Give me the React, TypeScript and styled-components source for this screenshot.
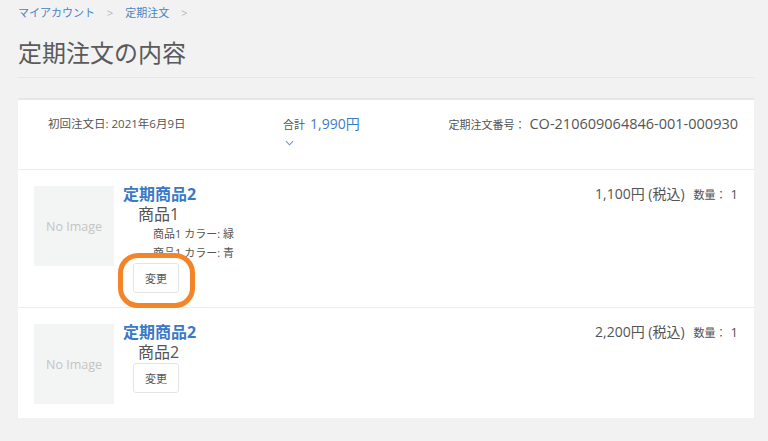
import styled, { createGlobalStyle } from "styled-components";

const GlobalStyle = createGlobalStyle`
  html, body {
    margin: 0;
    padding: 0;
    background: #f2f2f2;
  }
  body {
    font-family: "Open Sans", "Noto Sans CJK JP", sans-serif;
    color: #555;
  }
  * {
    box-sizing: border-box;
  }
`;

type Item = {
  id: number;
  name: string;
  options: string[];
  price: string;
  qty: number;
  marked?: boolean;
};

const items: Item[] = [
  {
    id: 1,
    name: "商品1",
    options: ["商品1 カラー: 緑", "商品1 カラー: 青"],
    price: "1,100円 (税込)",
    qty: 1,
    marked: true,
  },
  { id: 2, name: "商品2", options: [], price: "2,200円 (税込)", qty: 1 },
];

const App = () => {
  return (
    <Page>
      <GlobalStyle />
      <Breadcrumb>
        <Crumb>マイアカウント</Crumb>
        <Sep>&gt;</Sep>
        <Crumb>定期注文</Crumb>
        <Sep>&gt;</Sep>
      </Breadcrumb>
      <Title>定期注文の内容</Title>
      <Card>
        <Summary>
          <Meta>初回注文日: 2021年6月9日</Meta>
          <Total>
            <TotalLine>
              <Label>合計</Label>
              <TotalValue>1,990円</TotalValue>
            </TotalLine>
            <Chevron viewBox="0 0 10 6" width="9" height="6">
              <path d="M1 1l4 4 4-4" fill="none" stroke="#6f95c6" strokeWidth="1.2" />
            </Chevron>
          </Total>
          <OrderNo>
            <Label>定期注文番号：</Label>
            <OrderValue>CO-210609064846-001-000930</OrderValue>
          </OrderNo>
        </Summary>
        {items.map((item) => (
          <Row key={item.id}>
            <Thumb>No Image</Thumb>
            <Info>
              <ProductTitle>定期商品2</ProductTitle>
              <ProductName>{item.name}</ProductName>
              {item.options.map((o) => (
                <Option key={o}>{o}</Option>
              ))}
              <ButtonWrap>
                <ChangeButton>変更</ChangeButton>
                {item.marked && <Highlight />}
              </ButtonWrap>
            </Info>
            <PriceBox>
              <Price>{item.price}</Price>
              <Label>数量：</Label>
              <Qty>{item.qty}</Qty>
            </PriceBox>
          </Row>
        ))}
      </Card>
    </Page>
  );
};

const Page = styled.div`
  width: 768px;
  height: 441px;
  padding: 4px 14px 0 18px;
  overflow: hidden;
`;

const Breadcrumb = styled.nav`
  display: flex;
  align-items: center;
  height: 18px;
  font-size: 11px;
  line-height: 18px;
`;

const Crumb = styled.a`
  color: #4a84c6;
`;

const Sep = styled.span`
  color: #b5b5b5;
  margin: 0 12px;
`;

const Title = styled.h1`
  margin: 0;
  padding: 16px 0 9px;
  font-size: 24px;
  line-height: 30px;
  font-weight: normal;
  color: #5a5a5a;
  border-bottom: 1px solid #e6e6e6;
`;

const Card = styled.section`
  margin-top: 20px;
  background: #fff;
  border-top: 2px solid #e6e6e6;
`;

const Summary = styled.div`
  display: flex;
  align-items: flex-start;
  height: 70px;
  padding: 14px 16px 0 30px;
  border-bottom: 1px solid #ececec;
`;

const Meta = styled.div`
  width: 235px;
  font-size: 11.5px;
  line-height: 20px;
  color: #555;
`;

const Total = styled.div`
  display: flex;
  flex-direction: column;
`;

const TotalLine = styled.div`
  display: flex;
  align-items: baseline;
  gap: 5px;
  line-height: 20px;
`;

const Label = styled.span`
  font-size: 11px;
  color: #555;
`;

const TotalValue = styled.span`
  font-size: 14px;
  color: #3f7cc6;
`;

const Chevron = styled.svg`
  display: block;
  margin: 5px 0 0 2px;
`;

const OrderNo = styled.div`
  display: flex;
  align-items: baseline;
  gap: 4px;
  margin-left: auto;
  line-height: 20px;
`;

const OrderValue = styled.span`
  font-size: 14.5px;
  color: #555;
`;

const Row = styled.div`
  display: flex;
  align-items: flex-start;
  padding: 14px 16px;
  border-bottom: 1px solid #ececec;

  &:last-child {
    border-bottom: none;
  }
`;

const Thumb = styled.div`
  width: 80px;
  height: 80px;
  margin-top: 2px;
  flex-shrink: 0;
  display: flex;
  align-items: center;
  justify-content: center;
  background: #f3f4f4;
  color: #c4c4c4;
  font-size: 12.5px;
`;

const Info = styled.div`
  display: flex;
  flex-direction: column;
  align-items: flex-start;
  margin-left: 9px;
  flex: 1;
`;

const ProductTitle = styled.a`
  font-size: 16px;
  font-weight: bold;
  line-height: 20px;
  color: #3a78c8;
`;

const ProductName = styled.div`
  padding-left: 15px;
  font-size: 16px;
  line-height: 20px;
  color: #555;
`;

const Option = styled.div`
  padding-left: 30px;
  font-size: 11px;
  line-height: 19px;
  color: #555;
`;

const ButtonWrap = styled.div`
  position: relative;
  margin: 1px 0 0 10px;
`;

const ChangeButton = styled.button`
  display: block;
  width: 46px;
  height: 30px;
  padding: 0;
  border: 1px solid #e4e4e4;
  border-radius: 3px;
  background: #fff;
  color: #555;
  font-family: inherit;
  font-size: 11px;
`;

const Highlight = styled.span`
  position: absolute;
  left: -15px;
  top: -10px;
  width: 77px;
  height: 55px;
  border: 5px solid #f58428;
  border-radius: 20px;
  pointer-events: none;
`;

const PriceBox = styled.div`
  display: flex;
  align-items: baseline;
  line-height: 20px;
`;

const Price = styled.span`
  font-size: 14px;
  color: #555;
  margin-right: 9px;
`;

const Qty = styled.span`
  font-size: 13px;
  color: #555;
  margin-left: 4px;
`;

export default App;
